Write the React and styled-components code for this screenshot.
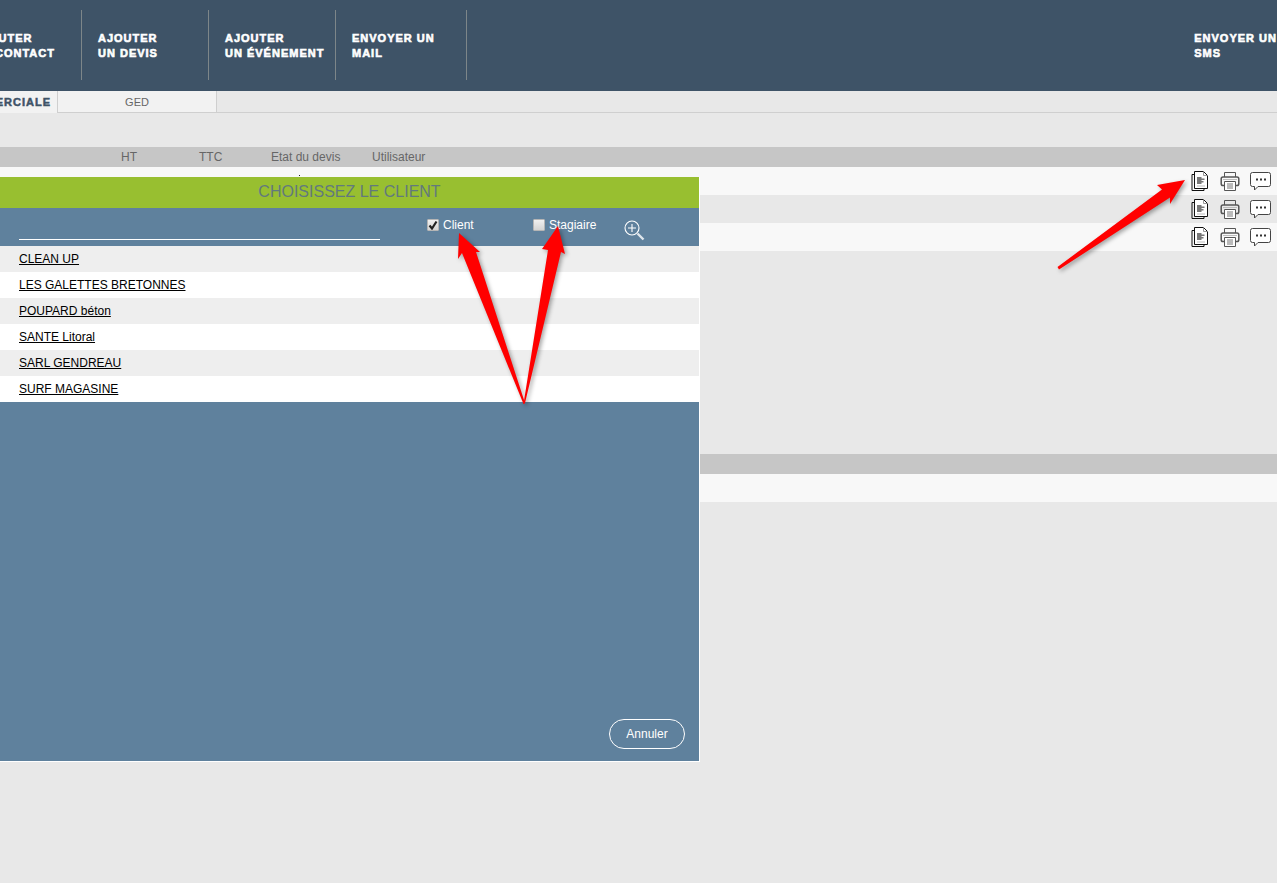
import styled, { createGlobalStyle } from "styled-components"

const GlobalStyle = createGlobalStyle`
    html, body {
        margin: 0;
        padding: 0;
        height: 883px;
        overflow: hidden;
        background-color: #e8e8e8;
        font-family: "Liberation Sans", Arial, sans-serif;
    }
`

const clients = ["CLEAN UP", "LES GALETTES BRETONNES", "POUPARD béton", "SANTE Litoral", "SARL GENDREAU", "SURF MAGASINE"]

function DocIcon() {
    return (
        <svg width="18" height="20" viewBox="0 0 18 20" fill="none">
            <path d="M3.5 3.5H1V19.5H13V17.5" stroke="#111" />
            <path d="M3.5 .5H12.5L16.5 4.5V17.5H3.5Z" fill="#fff" stroke="#111" />
            <path d="M12.5 .5V4.5H16.5" stroke="#999" />
            <path d="M6 6h4.5v1.5h3V9h-3v1h2v1.5h-2V13H6Z" fill="#777" />
            <path d="M6 14.5h8v1H6Z" fill="#bbb" />
        </svg>
    )
}

function PrintIcon() {
    return (
        <svg width="20" height="20" viewBox="0 0 20 20" fill="none">
            <path d="M4.5 6V1.5H15.5V6" stroke="#555" />
            <path d="M4.5 14.5H3Q1.2 14.5 1.2 12.7V7.8Q1.2 6 3 6H17Q18.8 6 18.8 7.8V12.7Q18.8 14.5 17 14.5H15.5" stroke="#555" strokeWidth="1.5" />
            <path d="M4.5 10.5H15.5V19.5H4.5Z" fill="#fff" stroke="#555" />
            <path d="M7 13h6M7 15h6M7 17h6" stroke="#777" />
            <path d="M3 8.5h14" stroke="#bbb" />
        </svg>
    )
}

function CommentIcon() {
    return (
        <svg width="21" height="19" viewBox="0 0 21 19" fill="none">
            <path d="M2.5 .5H18.5Q20.5 .5 20.5 2.5V12.5Q20.5 14.5 18.5 14.5H8L4.5 18V14.5H2.5Q.5 14.5 .5 12.5V2.5Q.5 .5 2.5 .5Z" fill="#fff" stroke="#444" />
            <path d="M6 6.5h2v2H6ZM10 6.5h2v2h-2ZM14 6.5h2v2h-2Z" fill="#333" />
        </svg>
    )
}

function ZoomIcon() {
    return (
        <SearchGlyph width="21" height="21" viewBox="0 0 21 21" fill="none">
            <circle cx="8" cy="8" r="7" stroke="#fff" strokeWidth="1.1" />
            <path d="M8 4v8M4 8h8" stroke="#fff" strokeWidth="1.1" />
            <path d="M13.5 13.5L19.5 19.5" stroke="#dfe6ec" strokeWidth="2.4" />
        </SearchGlyph>
    )
}

function Arrows() {
    return (
        <ArrowLayer width="1277" height="883" viewBox="0 0 1277 883">
            <polygon points="1185,180 1157,185 1162,189.5 1057.5,267 1059,269.5 1170,197.5 1170,204" />
            <polygon points="459,233 458,259 462,253 523.5,404 525,403 476,252 480,252" />
            <polygon points="558,226 542,249 548,250 523.5,404 525,403 561,252 565,254" />
        </ArrowLayer>
    )
}

function ActionRow({ shade }) {
    return (
        <Row shade={shade}>
            <IconCell width={29}><DocIcon /></IconCell>
            <IconCell width={30}><PrintIcon /></IconCell>
            <IconCell width={21}><CommentIcon /></IconCell>
        </Row>
    )
}

export default function App() {
    return (
        <Page>
            <GlobalStyle />
            <Header>
                <NavItem width={112} pad={3}>AJOUTER<br />UN CONTACT</NavItem>
                <NavItem width={127}>AJOUTER<br />UN DEVIS</NavItem>
                <NavItem width={127}>AJOUTER<br />UN ÉVÉNEMENT</NavItem>
                <NavItem width={131}>ENVOYER UN<br />MAIL</NavItem>
                <NavLast>ENVOYER UN<br />SMS</NavLast>
            </Header>

            <Tabs>
                <ActiveTab>COMMERCIALE</ActiveTab>
                <Tab>GED</Tab>
            </Tabs>

            <TableHead>
                <HeadCell left={121} width={78}>HT</HeadCell>
                <HeadCell width={72}>TTC</HeadCell>
                <HeadCell width={101}>Etat du devis</HeadCell>
                <HeadCell width={80}>Utilisateur</HeadCell>
            </TableHead>
            <ActionRow shade="#f8f8f8" />
            <ActionRow shade="#e8e8e8" />
            <ActionRow shade="#f8f8f8" />

            <SecondHead />
            <Row shade="#f8f8f8" />

            <Modal>
                <Speck />
                <ModalTitle>CHOISISSEZ LE CLIENT</ModalTitle>
                <Toolbar>
                    <Search />
                    <CheckLabel width={106}>
                        <CheckBox>
                            <svg width="10" height="10" viewBox="0 0 10 10"><path d="M1.5 5.5L4 8.5L8.5 1.5" fill="none" stroke="#222" strokeWidth="2.2" /></svg>
                        </CheckBox>
                        Client
                    </CheckLabel>
                    <CheckLabel width={91}>
                        <CheckBox />
                        Stagiaire
                    </CheckLabel>
                    <ZoomIcon />
                </Toolbar>
                <ClientList>
                    {clients.map((name, i) => (
                        <ClientRow key={name} odd={i % 2 === 0}><a>{name}</a></ClientRow>
                    ))}
                </ClientList>
                <ModalFooter>
                    <CancelButton>Annuler</CancelButton>
                </ModalFooter>
            </Modal>

            <Arrows />
        </Page>
    )
}

const Page = styled.div`
    position: relative;
    width: 1277px;
    height: 883px;
    overflow: hidden;
    background-color: #e8e8e8;
`
const Header = styled.div`
    height: 91px;
    box-sizing: border-box;
    padding: 10px 0 11px;
    margin-left: -30px;
    display: flex;
    background-color: #3e5367;
`
const NavItem = styled.div`
    width: ${props => props.width}px;
    box-sizing: border-box;
    padding: 21px 0 0 ${props => props.pad ?? 16}px;
    border-right: 1px solid #7d8689;
    color: #fff;
    font-size: 11px;
    font-weight: 700;
    line-height: 15px;
    letter-spacing: 1px;
    -webkit-text-stroke: 0.6px #fff;
    white-space: nowrap;
`
const NavLast = styled(NavItem)`
    width: auto;
    padding-left: 0;
    margin-left: auto;
    margin-right: 0;
    border-right: 0;
`
const Tabs = styled.div`
    height: 22px;
    box-sizing: border-box;
    display: flex;
    border-bottom: 1px solid #cfcfcf;
    font-size: 11px;
`
const Tab = styled.div`
    width: 159px;
    height: 21px;
    box-sizing: border-box;
    border-right: 1px solid #cfcfcf;
    background-color: #f2f2f2;
    color: #666;
    display: flex;
    align-items: center;
    justify-content: center;
`
const ActiveTab = styled.div`
    width: 58px;
    height: 22px;
    box-sizing: border-box;
    border-right: 1px solid #cfcfcf;
    background-color: #f2f2f2;
    color: #3e5367;
    font-weight: 700;
    letter-spacing: 1px;
    -webkit-text-stroke: 0.5px #3e5367;
    display: flex;
    align-items: center;
    justify-content: flex-end;
    padding-right: 6px;
    overflow: hidden;
    white-space: nowrap;
`
const TableHead = styled.div`
    height: 20px;
    margin-top: 34px;
    display: flex;
    align-items: center;
    background-color: #c6c6c6;
`
const SecondHead = styled.div`
    height: 20px;
    margin-top: 203px;
    background-color: #c6c6c6;
`
const HeadCell = styled.div`
    width: ${props => props.width}px;
    margin-left: ${props => props.left || 0}px;
    color: #666;
    font-size: 12px;
`
const Row = styled.div`
    height: 28px;
    box-sizing: border-box;
    padding-right: 6px;
    display: flex;
    justify-content: flex-end;
    align-items: center;
    background-color: ${props => props.shade};
`
const IconCell = styled.div`
    width: ${props => props.width}px;
    display: flex;
    justify-content: flex-start;
`
const Modal = styled.div`
    position: absolute;
    left: 0;
    top: 177px;
    width: 700px;
    height: 585px;
    box-sizing: border-box;
    display: flex;
    flex-direction: column;
    background-color: #5f819d;
    border-right: 1px solid #fff;
    border-bottom: 1px solid #fff;
`
const Speck = styled.div`
    position: absolute;
    left: 299px;
    top: -2px;
    width: 1px;
    height: 1px;
    background-color: #222;
`
const ModalTitle = styled.div`
    height: 30px;
    padding-bottom: 1px;
    display: flex;
    align-items: center;
    justify-content: center;
    background-color: #98bf30;
    color: #62797d;
    font-size: 16px;
`
const Toolbar = styled.div`
    height: 38px;
    box-sizing: border-box;
    padding-left: 19px;
    display: flex;
    align-items: flex-start;
`
const Search = styled.div`
    width: 361px;
    height: 32px;
    margin-right: 47px;
    box-sizing: border-box;
    border-bottom: 1px solid #fff;
`
const CheckLabel = styled.label`
    width: ${props => props.width}px;
    height: 34px;
    display: flex;
    align-items: center;
    gap: 4px;
    color: #fff;
    font-size: 12px;
`
const CheckBox = styled.span`
    width: 12px;
    height: 12px;
    display: flex;
    align-items: center;
    justify-content: center;
    border: 1px solid #b5b5b5;
    border-radius: 1px;
    box-sizing: border-box;
    background: linear-gradient(#f0f0f0, #d4d4d4);
`
const SearchGlyph = styled.svg`
    margin-top: 12px;
`
const ClientList = styled.div`
    display: flex;
    flex-direction: column;
`
const ClientRow = styled.div`
    height: 26px;
    box-sizing: border-box;
    padding-left: 19px;
    display: flex;
    align-items: center;
    background-color: ${props => (props.odd ? "#eeeeee" : "#ffffff")};
    font-size: 12px;
    a {
        color: #000;
        text-decoration: underline;
    }
`
const ModalFooter = styled.div`
    flex: 1;
    display: flex;
    align-items: flex-end;
    justify-content: flex-end;
    padding: 0 14px 12px 0;
`
const CancelButton = styled.button`
    width: 76px;
    height: 30px;
    padding: 0;
    border: 1px solid #fff;
    border-radius: 15px;
    background: transparent;
    color: #fff;
    font-family: "Liberation Sans", Arial, sans-serif;
    font-size: 12px;
`
const ArrowLayer = styled.svg`
    position: absolute;
    left: 0;
    top: 0;
    pointer-events: none;
    filter: drop-shadow(2px 2px 2px rgba(0, 0, 0, 0.35));
    polygon {
        fill: #ff0000;
    }
`
